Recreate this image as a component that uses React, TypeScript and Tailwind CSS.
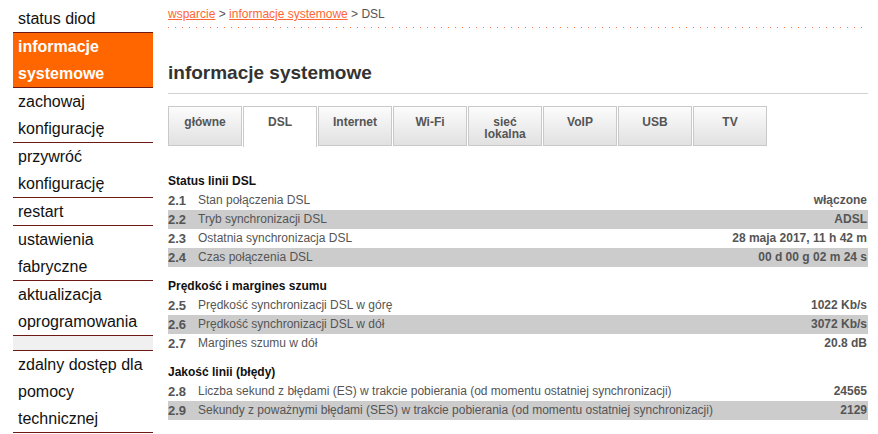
import React from 'react';

type MenuItem = { lines: string[]; active?: boolean; spacer?: boolean };

const menu: MenuItem[] = [
  { lines: ['status diod'] },
  { lines: ['informacje', 'systemowe'], active: true },
  { lines: ['zachowaj', 'konfigurację'] },
  { lines: ['przywróć', 'konfigurację'] },
  { lines: ['restart'] },
  { lines: ['ustawienia', 'fabryczne'] },
  { lines: ['aktualizacja', 'oprogramowania'] },
  { lines: [], spacer: true },
  { lines: ['zdalny dostęp dla', 'pomocy', 'technicznej'] },
];

const tabs = [
  { label: ['główne'] },
  { label: ['DSL'], active: true },
  { label: ['Internet'] },
  { label: ['Wi-Fi'] },
  { label: ['sieć', 'lokalna'] },
  { label: ['VoIP'] },
  { label: ['USB'] },
  { label: ['TV'] },
];

type Row = { no: string; label: string; value: string };

const sections: { title: string; rows: Row[] }[] = [
  {
    title: 'Status linii DSL',
    rows: [
      { no: '2.1', label: 'Stan połączenia DSL', value: 'włączone' },
      { no: '2.2', label: 'Tryb synchronizacji DSL', value: 'ADSL' },
      { no: '2.3', label: 'Ostatnia synchronizacja DSL', value: '28 maja 2017, 11 h 42 m' },
      { no: '2.4', label: 'Czas połączenia DSL', value: '00 d 00 g 02 m 24 s' },
    ],
  },
  {
    title: 'Prędkość i margines szumu',
    rows: [
      { no: '2.5', label: 'Prędkość synchronizacji DSL w górę', value: '1022 Kb/s' },
      { no: '2.6', label: 'Prędkość synchronizacji DSL w dół', value: '3072 Kb/s' },
      { no: '2.7', label: 'Margines szumu w dół', value: '20.8 dB' },
    ],
  },
  {
    title: 'Jakość linii (błędy)',
    rows: [
      {
        no: '2.8',
        label: 'Liczba sekund z błędami (ES) w trakcie pobierania (od momentu ostatniej synchronizacji)',
        value: '24565',
      },
      {
        no: '2.9',
        label: 'Sekundy z poważnymi błędami (SES) w trakcie pobierania (od momentu ostatniej synchronizacji)',
        value: '2129',
      },
    ],
  },
];

const Sidebar = () => (
  <div className="w-[140px] ml-[13px] shrink-0 text-[16px] leading-[27px] text-[#111]">
    {menu.map((item, i) => {
      if (item.spacer) {
        return <div key={i} className="h-[15px] bg-[#f0f0f0] border-b border-[#6d1a14]" />;
      }
      return (
        <div
          key={i}
          className={
            (item.active ? 'bg-[#ff6600] text-white font-bold ' : '') +
            (i === 0 ? 'pt-[5px] ' : '') +
            'pl-[5px] border-b border-[#6d1a14]'
          }
        >
          {item.lines.map((l) => (
            <div key={l}>{l}</div>
          ))}
        </div>
      );
    })}
  </div>
);

const Tabs = () => (
  <div className="flex gap-px mt-[12px]">
    {tabs.map((t) => (
      <div
        key={t.label.join(' ')}
        className={
          'w-[74px] h-[40px] border border-[#c9c9c9] pt-[9px] text-center text-[12px] leading-[12px] font-bold text-[#555] ' +
          (t.active ? 'bg-white border-b-0 h-[41px]' : 'bg-[linear-gradient(to_bottom,#fcfcfc,#e1e1e1)]')
        }
      >
        {t.label.map((l) => (
          <div key={l}>{l}</div>
        ))}
      </div>
    ))}
  </div>
);

export default function App() {
  return (
    <div className="w-[878px] h-[434px] overflow-hidden bg-white flex font-['Liberation_Sans',Arial,sans-serif]">
      <Sidebar />
      <div className="ml-[15px] w-[700px]">
        <div className="pt-[6px] pb-[5px] text-[12px] leading-[16px] text-[#555]">
          <a className="text-[#ff6633] underline">wsparcie</a> &gt;{' '}
          <a className="text-[#ff6633] underline">informacje systemowe</a> &gt; DSL
        </div>
        <div className="h-px bg-[linear-gradient(to_right,#ff7a3d_1px,transparent_1px)] bg-[length:7px_1px] bg-repeat-x" />
        <h1 className="mt-[33px] pb-[8px] border-b border-[#d2d2d2] text-[19px] leading-[24px] font-bold text-[#333]">
          informacje systemowe
        </h1>
        <Tabs />
        <div className="pt-[15px]">
          {sections.map((s) => (
            <div key={s.title}>
              <div className="mt-[9px] h-[20px] leading-[20px] text-[12px] font-bold text-[#111]">{s.title}</div>
              {s.rows.map((r, i) => (
                <div
                  key={r.no}
                  className={
                    'flex h-[19px] leading-[19px] text-[12px] text-[#555] ' + (i % 2 === 1 ? 'bg-[#cccccc]' : '')
                  }
                >
                  <div className="w-[30px] font-bold text-[13px] text-[#555]">{r.no}</div>
                  <div className="flex-1 whitespace-nowrap">{r.label}</div>
                  <div className="font-bold text-right pr-px">{r.value}</div>
                </div>
              ))}
            </div>
          ))}
        </div>
      </div>
    </div>
  );
}
